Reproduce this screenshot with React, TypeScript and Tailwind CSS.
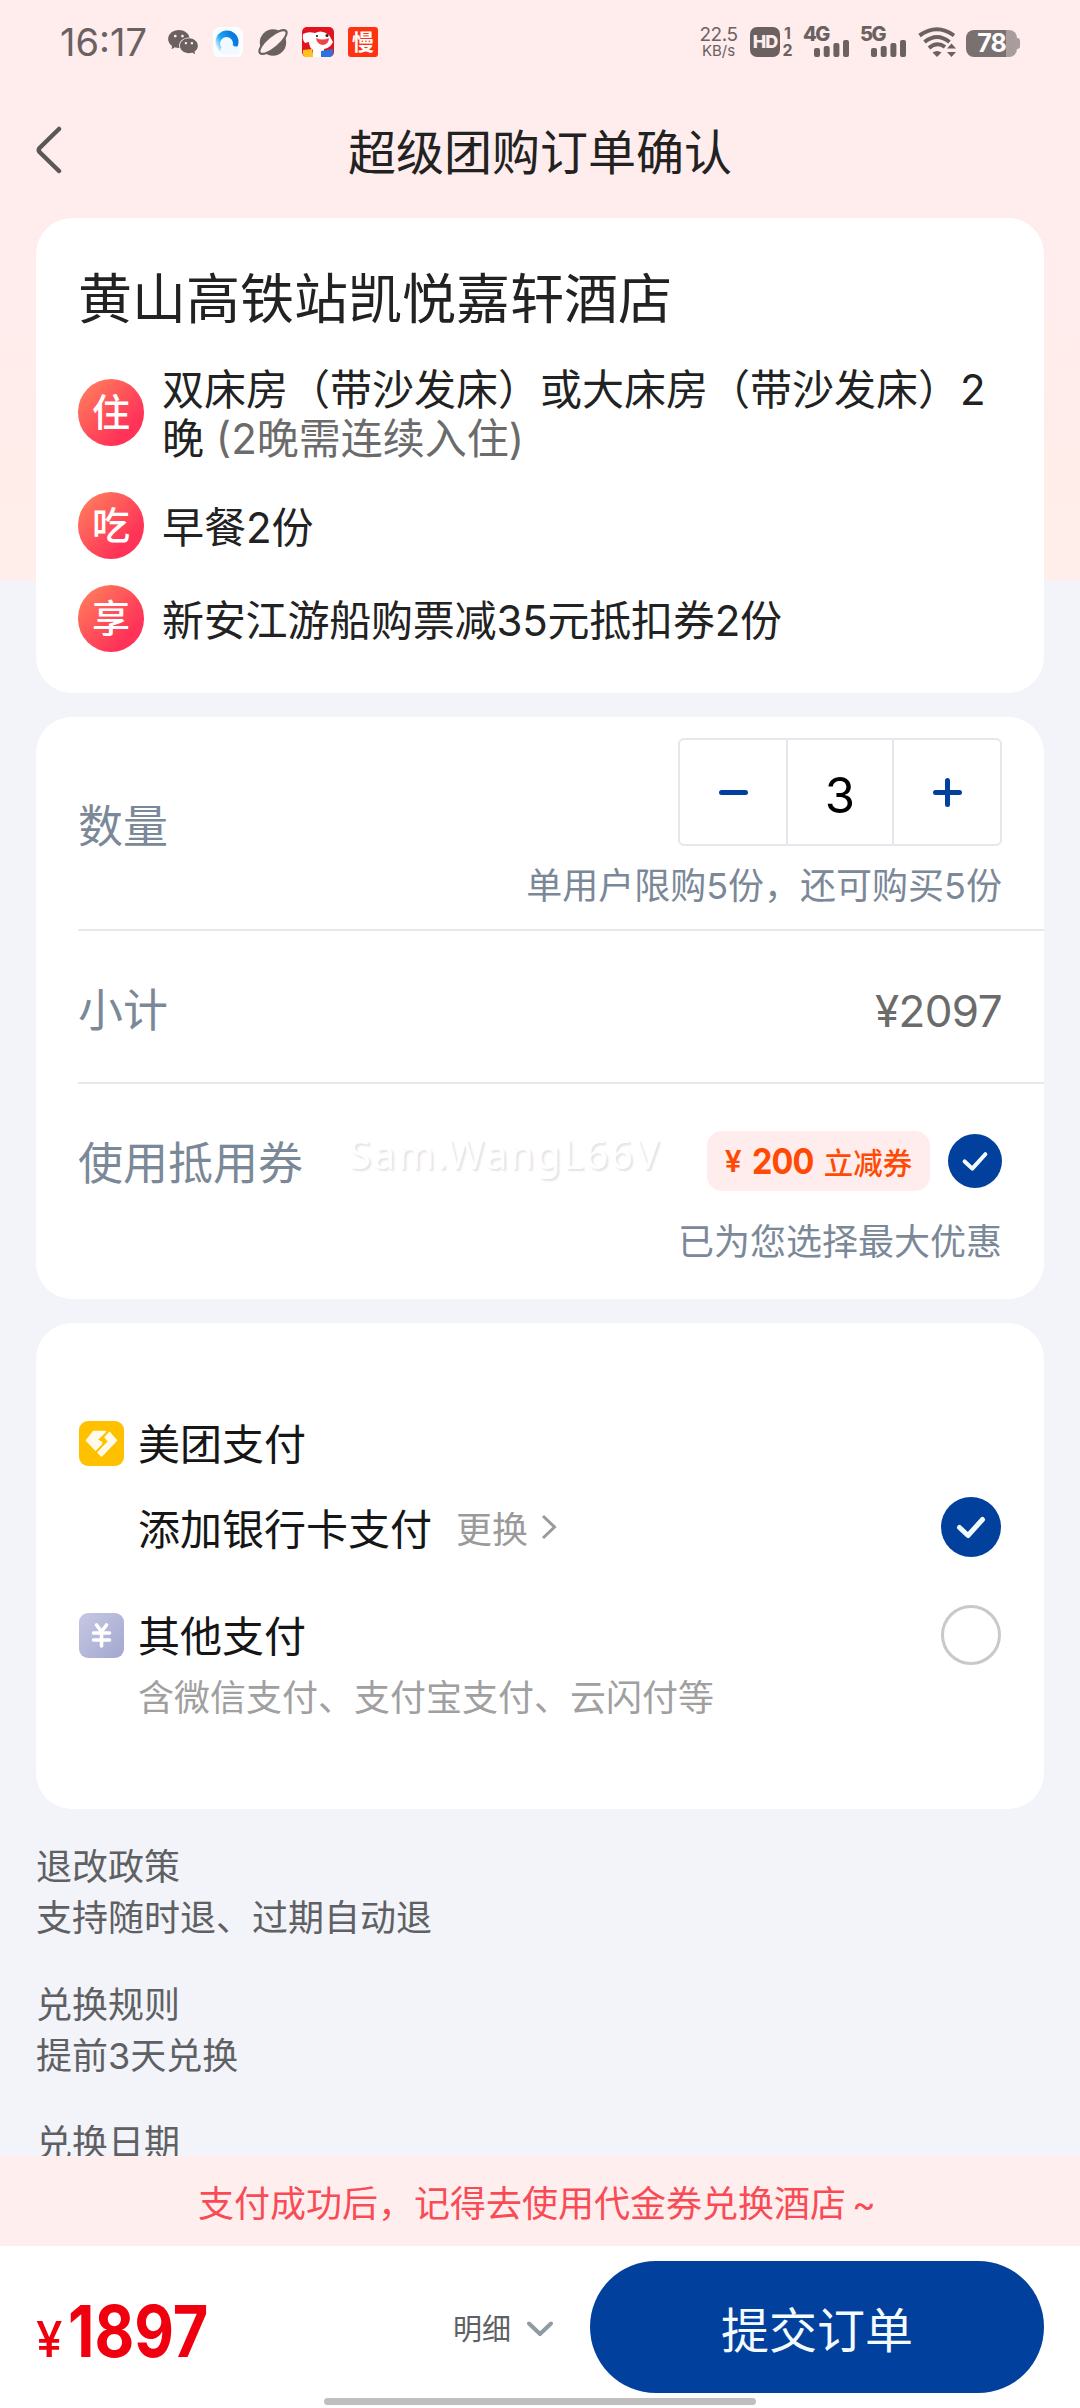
import React from 'react';
import { AiFillWechat } from 'react-icons/ai';

function SignalBars() {
  return (
    <svg viewBox="0 0 35 17" className="h-[17px] w-[35px]" fill="#6b6161">
      <rect x="0" y="8" width="6" height="9" rx="2" />
      <rect x="9.7" y="6" width="6" height="11" rx="2" />
      <rect x="19.4" y="3" width="6" height="14" rx="2" />
      <rect x="29" y="0" width="6" height="17" rx="2" />
    </svg>
  );
}

function Network({ label, className }: { label: string; className: string }) {
  return (
    <div className={`relative h-[30px] w-[46px] ${className}`}>
      <span className="absolute left-0 top-0 text-[20px] font-extrabold leading-[15px] tracking-[-1.5px]">{label}</span>
      <div className="absolute bottom-0 right-0">
        <SignalBars />
      </div>
    </div>
  );
}

function StatusBar() {
  return (
    <div className="flex h-[84px] shrink-0 items-center pl-[60px] pr-[60px] text-[#6b6161]">
      <span className="w-[109px] text-[38px] leading-[38px]">16:17</span>
      <AiFillWechat className="-ml-[3px] h-[34px] w-[34px]" color="#6b6161" />
      <svg viewBox="0 0 30 30" className="ml-[13px] h-[30px] w-[30px]">
        <defs>
          <linearGradient id="ring" x1="0.9" y1="0.5" x2="0.15" y2="0.9">
            <stop offset="0" stopColor="#0a78e0" />
            <stop offset="0.6" stopColor="#1ba6f6" />
            <stop offset="1" stopColor="#d4f1ff" />
          </linearGradient>
        </defs>
        <rect width="30" height="30" rx="6" fill="#fafdff" />
        <circle cx="14" cy="15" r="11.500" fill="url(#ring)" />
        <circle cx="13.500" cy="16.500" r="6.500" fill="#f0f9ff" />
        <path d="M8 21 Q11 17 16 18.500 Q19 16.500 21.500 19.500 L26.500 19.500 V27 H10 Q6 25 8 21Z" fill="#f0f9ff" />
      </svg>
      <svg viewBox="0 0 30 30" className="ml-[15px] h-[30px] w-[30px]">
        <circle cx="15" cy="15.500" r="13.2" fill="#6b6161" />
        <ellipse cx="15" cy="15" rx="17" ry="6" transform="rotate(-40 15 15)" fill="#ffecec" />
        <ellipse cx="15" cy="15" rx="17" ry="6" transform="rotate(-40 15 15)" fill="none" stroke="#6b6161" strokeWidth="2.200" />
      </svg>
      <svg viewBox="0 0 32 30" className="ml-[14px] h-[30px] w-[32px]">
        <rect width="32" height="30" rx="5" fill="#e2131f" />
        <path d="M1 7 Q6 4 13 6 Q20 2 27 8 L31 15 Q28 21 22 22 L22 30 H10 L11 23 Q7 20 7 15 L3 16 Q0 13 1 7Z" fill="#fff" />
        <path d="M14 11 Q20 14 27 11 Q26.500 18 20.500 18 Q15 17 14 11Z" fill="#ef4344" />
        <circle cx="15" cy="9" r="1.1" fill="#222" />
        <circle cx="25" cy="8.500" r="1.500" fill="#222" />
        <path d="M1 23 L10 22 L11 30 H5 Q1 30 1 26Z" fill="#ffc21a" />
        <path d="M19 24 L31 22 V26 Q31 30 27 30 H19Z" fill="#2a74e0" />
      </svg>
      <div className="ml-[14px] flex h-[30px] w-[30px] items-center justify-center rounded-[3px] bg-[#ff3311] text-[22px] font-bold leading-none text-white">
        慢
      </div>
      <div className="ml-auto flex w-[37px] flex-col items-center">
        <span className="text-[19px] leading-[17px] tracking-[-0.5px]">22.5</span>
        <span className="text-[15px] leading-[15px]">KB/s</span>
      </div>
      <div className="ml-[13px] flex h-[30px] w-[30px] items-center justify-center rounded-[7px] bg-[#6b6161] text-[18px] font-extrabold leading-none tracking-[-1px] text-[#ffecec]">
        HD
      </div>
      <div className="ml-[2px] flex w-[11px] flex-col items-center text-[16px] font-bold leading-[17px]">
        <span>1</span>
        <span>2</span>
      </div>
      <Network label="4G" className="ml-[10px]" />
      <Network label="5G" className="ml-[11px]" />
      <svg viewBox="0 0 38 30" className="ml-[12px] h-[30px] w-[38px]" fill="none" stroke="#6b6161" strokeWidth="4">
        <path d="M1.500 8.500 Q19 -4 36 8.500" />
        <path d="M6.500 15 Q19 5 31.500 15" />
        <path d="M11 21 Q19 14 27 20" />
        <path d="M14.500 25.500 Q19 22.500 23.500 25.500 L19 30Z" fill="#6b6161" stroke="none" />
        <path d="M29 21.500 L33.500 16.500 L38 21.500Z M29 25 L33.500 30 L38 25Z" fill="#6b6161" stroke="none" />
      </svg>
      <div className="ml-[10px] flex items-center pt-[3px]">
        <div className="flex h-[27px] w-[51px] items-center justify-center rounded-[8px] bg-[linear-gradient(to_right,#7a7070_78%,#a89c9c_78%)] text-[25px] font-bold leading-none tracking-[-1px] text-white">
          78
        </div>
        <div className="h-[11px] w-[3px] rounded-r bg-[#a89c9c]" />
      </div>
    </div>
  );
}

function Badge({ text }: { text: string }) {
  return (
    <div className="flex h-[67px] w-[66px] shrink-0 items-center justify-center rounded-full bg-[linear-gradient(135deg,#ff7a5c_10%,#ff3358_75%)] text-[38px] font-medium leading-none text-white">
      <span className="-mt-px">{text}</span>
    </div>
  );
}

function Check({ className, size }: { className: string; size: number }) {
  return (
    <svg viewBox="0 0 60 60" className={className} fill="none">
      <circle cx="30" cy="30" r="30" fill="#01409c" />
      <path d="M18.500 30.500 L27 38.500 L41.500 22.500" stroke="#f4fbff" strokeWidth={size} strokeLinecap="round" strokeLinejoin="round" />
    </svg>
  );
}

function Policy({ title, text }: { title: string; text: string }) {
  return (
    <div className="mb-9 leading-[51px]">
      <p>{title}</p>
      <p>{text}</p>
    </div>
  );
}

export default function App() {
  return (
    <div
      lang="zh-CN"
      className="flex h-[2408px] w-[1080px] flex-col overflow-hidden bg-[#f2f4f9] font-['Inter','Noto_Sans_CJK_SC',sans-serif] text-[#222]"
    >
      <div className="flex h-[2156px] shrink-0 flex-col overflow-hidden bg-[linear-gradient(to_bottom,#ffecec_0,#ffecec_300px,#ffeee9_580px,#f2f4f9_581px)]">
        <StatusBar />
        <header className="flex h-[134px] shrink-0 items-center px-[36px]">
          <svg viewBox="0 0 26 48" className="-mt-[2px] h-[48px] w-[26px]" fill="none" stroke="#5b5757" strokeWidth="4.500" strokeLinecap="round" strokeLinejoin="round">
            <path d="M23 3 L3.500 22 Q2 24 3.500 26 L23 45" />
          </svg>
          <h1 className="mr-[26px] flex-1 pt-[4px] text-center text-[48px] leading-[60px]">超级团购订单确认</h1>
        </header>

        <section className="mx-[36px] h-[475px] shrink-0 rounded-[36px] bg-white px-[42px] pt-[52px]">
          <h2 className="text-[54px] leading-[60px]">黄山高铁站凯悦嘉轩酒店</h2>
          <div className="mt-[33px] flex h-[98px] items-center">
            <Badge text="住" />
            <p className="ml-[18px] pt-[3px] text-[42px] leading-[49px]">
              双床房（带沙发床）或大床房（带沙发床）2<br />晚 <span className="text-[#6b6b6b]">(2晚需连续入住)</span>
            </p>
          </div>
          <div className="mt-[31px] flex h-[67px] items-center">
            <Badge text="吃" />
            <p className="ml-[18px] pt-[4px] text-[42px] leading-[49px]">早餐2份</p>
          </div>
          <div className="mt-[26px] flex h-[67px] items-center">
            <Badge text="享" />
            <p className="ml-[18px] pt-[4px] text-[42px] leading-[49px] tracking-[-0.2px]">新安江游船购票减35元抵扣券2份</p>
          </div>
        </section>

        <section className="mx-[36px] mt-[24px] h-[582px] shrink-0 rounded-[36px] bg-white pl-[42px] text-[#7b8898]">
          <div className="flex h-[214px] items-center justify-between border-b-2 border-[#e7e8eb] pr-[42px]">
            <span className="pt-[7px] text-[45px] leading-[60px]">数量</span>
            <div className="flex flex-col items-end pt-[4px]">
              <div className="flex h-[108px] w-[324px] rounded-[6px] border-2 border-[#e4e7ec]">
                <div className="flex flex-1 items-center justify-center">
                  <div className="h-[5px] w-[29px] rounded-full bg-[#01409c]" />
                </div>
                <div className="flex w-[108px] items-center justify-center border-x-2 border-[#e4e7ec] pt-[7px] text-[49px] leading-none text-black">3</div>
                <div className="flex flex-1 items-center justify-center">
                  <svg viewBox="0 0 29 29" className="h-[29px] w-[29px]" stroke="#01409c" strokeWidth="5" strokeLinecap="round">
                    <path d="M2.500 14.500 H26.500 M14.500 2.500 V26.500" />
                  </svg>
                </div>
              </div>
              <span className="mt-[15px] text-[36px] leading-[51px]">单用户限购5份，还可购买5份</span>
            </div>
          </div>
          <div className="flex h-[153px] items-center justify-between border-b-2 border-[#e7e8eb] pr-[42px] pt-[8px]">
            <span className="text-[45px] leading-[60px]">小计</span>
            <span className="text-[44px] leading-[60px] tracking-[-0.6px] text-[#6b6b6b]">¥2097</span>
          </div>
          <div className="pr-[42px] pt-[44px]">
            <div className="flex h-[66px] items-center">
              <span className="w-[271px] pt-[6px] text-[45px] leading-[60px]">使用抵用券</span>
              <span className="-mt-[15px] whitespace-nowrap font-['Noto_Sans'] text-[40px] leading-[50px] tracking-[1.9px] text-white [text-shadow:2px_2px_2px_#e3e3e5]">
                Sam.WangL66V
              </span>
              <div className="ml-auto flex h-[60px] w-[223px] items-center justify-center rounded-[15px] bg-[#ffecec] text-[#ff4a05]">
                <span className="text-[30px] font-semibold leading-[40px]">¥</span>
                <span className="ml-[10px] origin-left scale-x-[0.9] text-[36px] font-bold leading-[40px] tracking-[-1px]">200</span>
                <span className="ml-[4px] pt-[3px] text-[29.500px] font-medium leading-[40px]">立减券</span>
              </div>
              <Check className="ml-[18px] h-[54px] w-[54px]" size={4.5} />
            </div>
            <p className="mt-[23px] text-right text-[36px] leading-[51px]">已为您选择最大优惠</p>
          </div>
        </section>

        <section className="mx-[36px] mt-[24px] h-[486px] shrink-0 rounded-[36px] bg-white px-[43px] pt-[90px] text-[#161616]">
          <div className="flex h-[60px] items-center">
            <svg viewBox="0 0 45 45" className="h-[45px] w-[45px]">
              <rect width="45" height="45" rx="9" fill="#ffc000" />
              <path d="M7.500 19.500 L14.500 10.500 H26.500 L19 18 L25 20.500 L16.500 29Z" fill="#fffbe8" stroke="#fffbe8" strokeWidth="1.500" strokeLinejoin="round" />
              <path d="M30.500 11.500 L37.500 19.500 L22.500 35 L19 31.500 L29.500 20.500 L25 17.500Z" fill="#fffbe8" stroke="#fffbe8" strokeWidth="1.500" strokeLinejoin="round" />
              <path d="M25 16 L28.500 20.500 L22.500 25.500 L23.500 21 L19 18.500Z" fill="#ffc000" />
            </svg>
            <span className="ml-[14px] pt-[3px] text-[42px] leading-[60px]">美团支付</span>
          </div>
          <div className="mt-[24px] flex h-[60px] items-center pl-[59px]">
            <span className="pt-[6px] text-[42px] leading-[60px]">添加银行卡支付</span>
            <span className="ml-[24px] pt-[5px] text-[36px] leading-[60px] text-[#9a9a9a]">更换</span>
            <svg viewBox="0 0 16 26" className="ml-[13px] h-[26px] w-[16px]" fill="none" stroke="#9a9a9a" strokeWidth="3">
              <path d="M2 2 L13.500 13 L2 24" />
            </svg>
            <Check className="ml-auto h-[60px] w-[60px]" size={5} />
          </div>
          <div className="mt-[48px] flex h-[60px] items-center">
            <svg viewBox="0 0 45 45" className="h-[45px] w-[45px]">
              <defs>
                <linearGradient id="lilac" x1="0" y1="0" x2="1" y2="1">
                  <stop offset="0" stopColor="#c6c8e2" />
                  <stop offset="1" stopColor="#a3a7d0" />
                </linearGradient>
              </defs>
              <rect width="45" height="45" rx="9" fill="url(#lilac)" />
              <path d="M17.500 12 L22.500 18.500 L27.500 12 M14.500 20 H30.500 M14.500 27 H30.500 M22.500 19 V33" fill="none" stroke="#fff" strokeWidth="3.600" strokeLinecap="round" />
            </svg>
            <span className="ml-[14px] pt-[3px] text-[42px] leading-[60px]">其他支付</span>
            <div className="ml-auto h-[60px] w-[60px] rounded-full border-[3px] border-[#c9c9c9]" />
          </div>
          <p className="mt-[8px] pl-[59px] text-[36px] leading-[51px] text-[#a0a0a0]">含微信支付、支付宝支付、云闪付等</p>
        </section>

        <section className="mt-[33px] px-[36px] text-[36px] text-[#5f6063]">
          <Policy title="退改政策" text="支持随时退、过期自动退" />
          <Policy title="兑换规则" text="提前3天兑换" />
          <p className="leading-[51px]">兑换日期</p>
        </section>
      </div>

      <div className="flex h-[90px] shrink-0 items-center justify-center bg-[#ffeeee] pt-[6px] text-[36px] leading-[51px] text-[#f94b55]">
        支付成功后，记得去使用代金券兑换酒店
        <span className="w-[36px] text-center">~</span>
      </div>

      <footer className="relative flex h-[162px] shrink-0 items-start bg-white px-[36px] pt-[15px]">
        <div className="flex h-[132px] w-[417px] items-baseline pt-[35px] text-[#f0000f]">
          <span className="w-[32px] text-[50px] font-medium leading-[70px]">
            <span className="inline-block origin-left scale-x-[0.95]">¥</span>
          </span>
          <span className="inline-block origin-left scale-x-[0.85] text-[72px] font-bold leading-[70px]">1897</span>
        </div>
        <div className="flex h-[132px] items-center pt-1">
          <span className="pt-[2px] text-[29px] leading-[40px] text-[#5f6063]">明细</span>
          <svg viewBox="0 0 28 18" className="ml-[15px] h-[18px] w-[28px]" fill="none" stroke="#8e9ba3" strokeWidth="4" strokeLinecap="round" strokeLinejoin="round">
            <path d="M3 3.500 L14 14 L25 3.500" />
          </svg>
        </div>
        <button className="ml-auto h-[132px] w-[454px] rounded-full bg-[#01409c] pt-[7px] text-[48px] leading-none text-[#f4fbff]">提交订单</button>
        <div className="absolute bottom-[3px] left-[324px] h-[7px] w-[432px] rounded-full bg-[#bfbfbf]" />
      </footer>
    </div>
  );
}
